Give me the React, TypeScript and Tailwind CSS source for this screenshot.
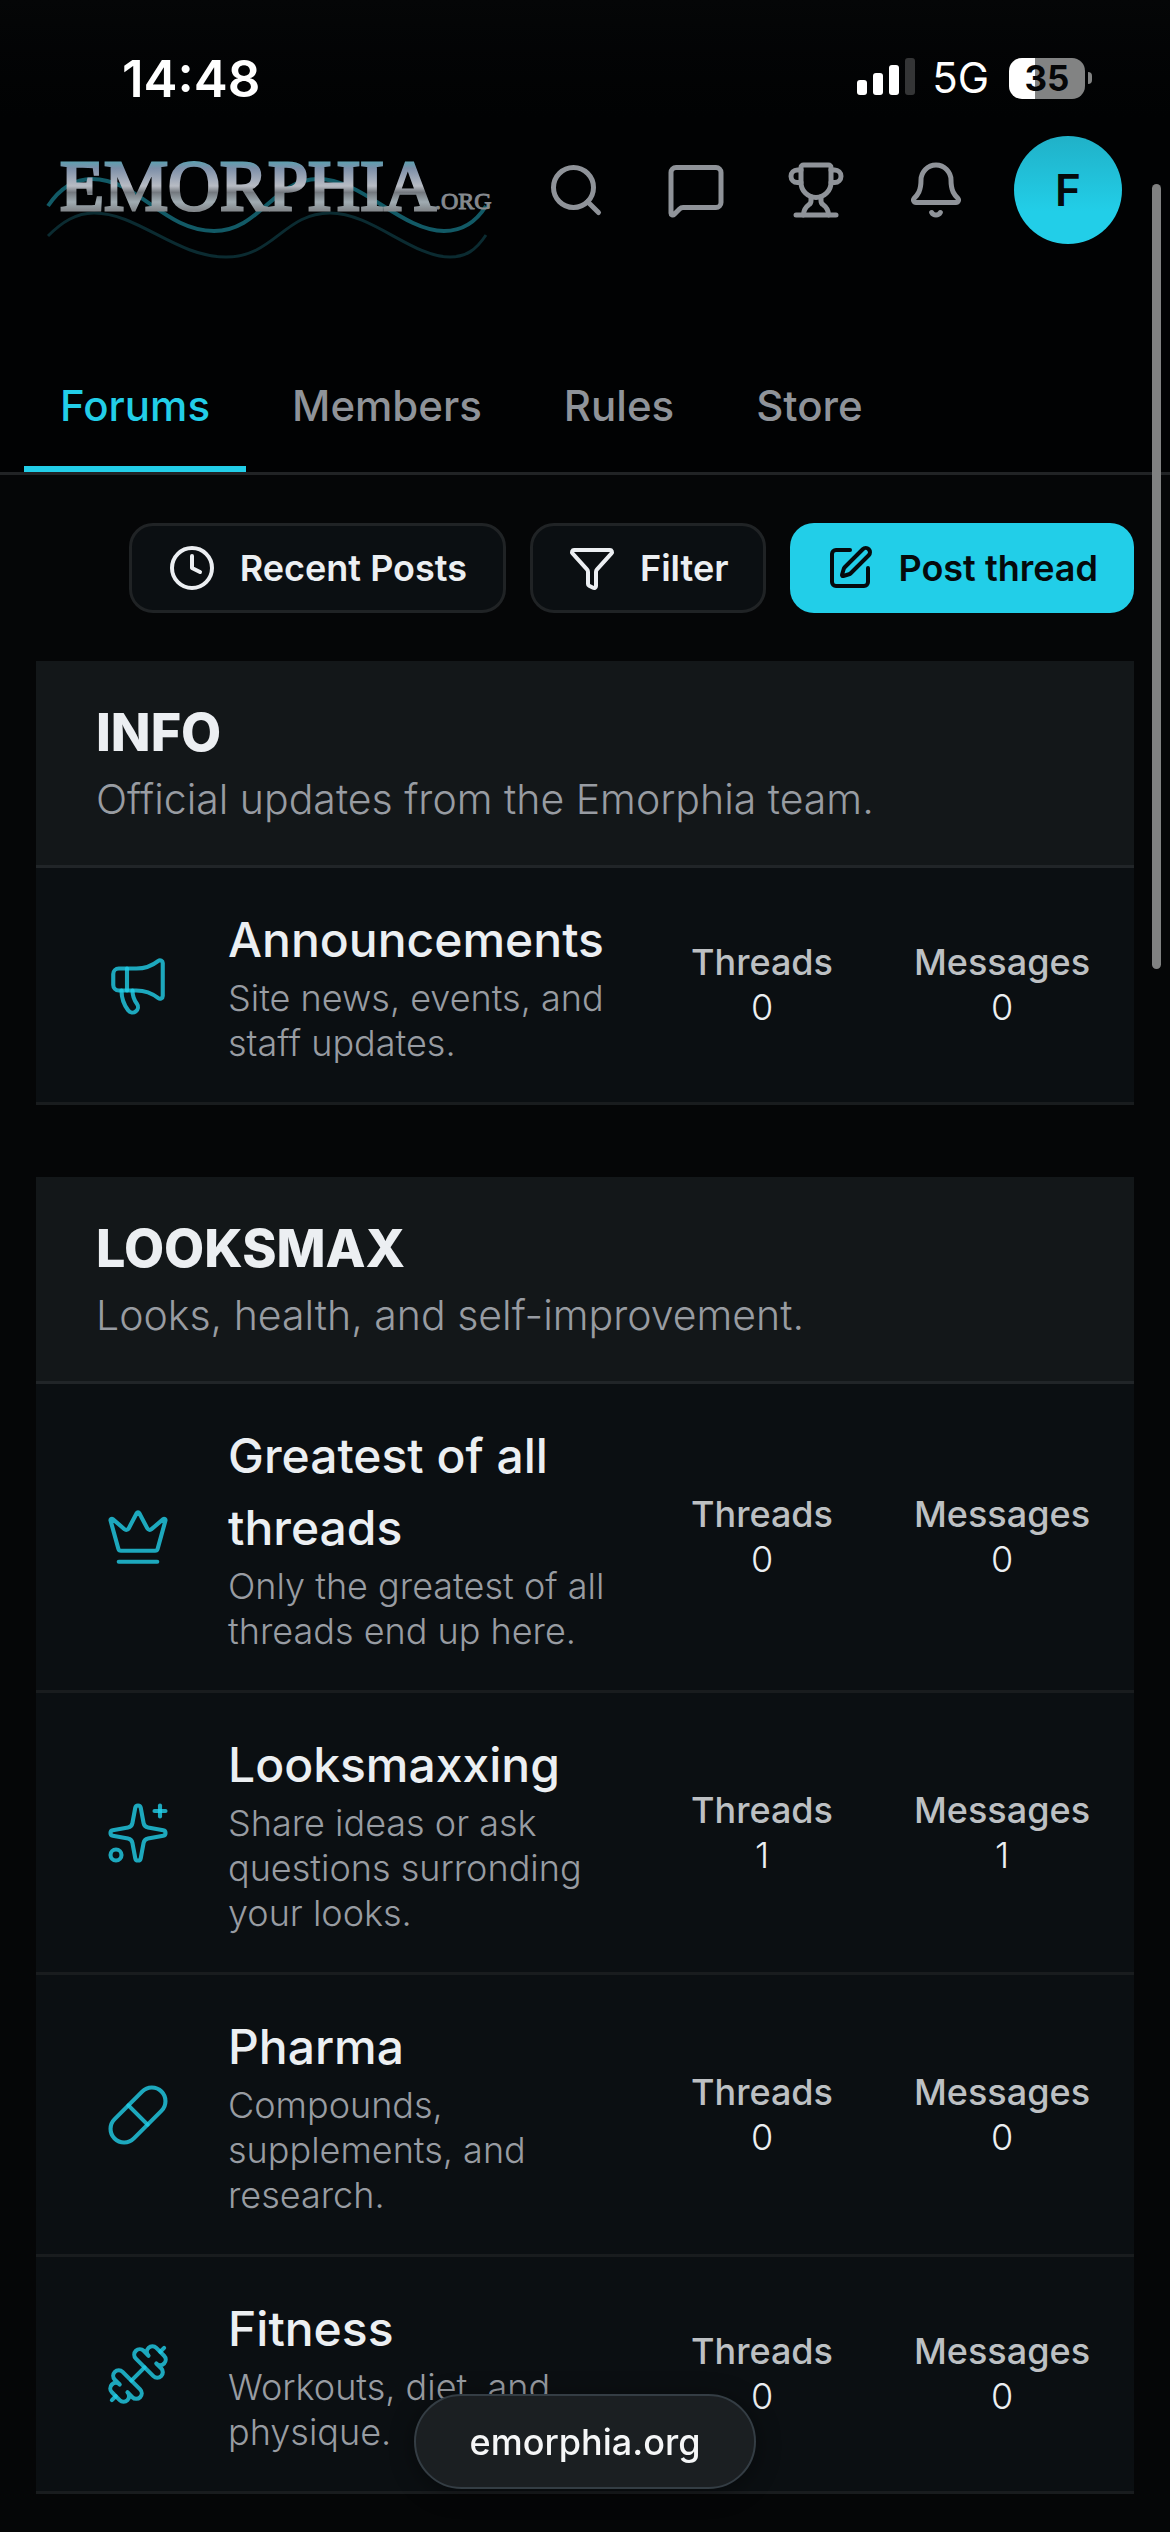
import {
    Bell,
    Clock,
    Crown,
    Dumbbell,
    Funnel,
    Megaphone,
    MessageSquare,
    Pill,
    Search,
    Sparkles,
    SquarePen,
    Trophy,
    type LucideIcon,
} from 'lucide-react';
import React from 'react';

type Forum = {
    title: string;
    description: string;
    icon: LucideIcon;
    threads: number;
    messages: number;
};

type Category = {
    title: string;
    description: string;
    forums: Forum[];
};

const categories: Category[] = [
    {
        title: 'INFO',
        description: 'Official updates from the Emorphia team.',
        forums: [
            {
                title: 'Announcements',
                description: 'Site news, events, and staff updates.',
                icon: Megaphone,
                threads: 0,
                messages: 0,
            },
        ],
    },
    {
        title: 'LOOKSMAX',
        description: 'Looks, health, and self-improvement.',
        forums: [
            {
                title: 'Greatest of all threads',
                description: 'Only the greatest of all threads end up here.',
                icon: Crown,
                threads: 0,
                messages: 0,
            },
            {
                title: 'Looksmaxxing',
                description: 'Share ideas or ask questions surronding your looks.',
                icon: Sparkles,
                threads: 1,
                messages: 1,
            },
            {
                title: 'Pharma',
                description: 'Compounds, supplements, and research.',
                icon: Pill,
                threads: 0,
                messages: 0,
            },
            {
                title: 'Fitness',
                description: 'Workouts, diet, and physique.',
                icon: Dumbbell,
                threads: 0,
                messages: 0,
            },
        ],
    },
];

const tabs = ['Forums', 'Members', 'Rules', 'Store'];

const actions = [
    { label: 'Search', icon: Search },
    { label: 'Conversations', icon: MessageSquare },
    { label: 'Trophies', icon: Trophy },
    { label: 'Alerts', icon: Bell },
];

function StatusBar() {
    return (
        <div className="flex h-[136px] items-center justify-between pt-5 pr-[78px] pl-[122px] text-white">
            <span className="text-[51px] leading-none font-semibold">14:48</span>
            <div className="flex items-center">
                <svg width="60" height="40" viewBox="0 0 60 40" fill="currentColor">
                    <rect x="1" y="22" width="10" height="15" rx="3" />
                    <rect x="17" y="15" width="10" height="22" rx="3" />
                    <rect x="33" y="7" width="10" height="30" rx="3" />
                    <rect x="49" y="0" width="10" height="37" rx="3" fill="#343536" />
                </svg>
                <span className="ml-4 text-[42px] leading-none">5G</span>
                <div className="ml-5 flex h-[41px] w-[76px] items-center justify-center rounded-[13px] bg-[linear-gradient(90deg,#fff_34%,#828383_34%)] text-[35px] leading-none font-bold text-[#050607]">
                    35
                </div>
                <div className="ml-[3px] h-3 w-1 rounded-r-full bg-[#828383]" />
            </div>
        </div>
    );
}

function Logo() {
    return (
        <a href="#" aria-label="Emorphia.org">
            <svg width="446" height="100" viewBox="0 0 446 100" fill="none" className="block overflow-visible">
                <defs>
                    <linearGradient id="chrome" x1="0" y1="0" x2="0" y2="1">
                        <stop offset="0.2" stopColor="#5f9fb0" />
                        <stop offset="0.28" stopColor="#7d8fa8" />
                        <stop offset="0.5" stopColor="#b8bcc4" />
                        <stop offset="0.58" stopColor="#73787e" />
                        <stop offset="0.7" stopColor="#a0acb2" />
                        <stop offset="0.8" stopColor="#84898d" />
                    </linearGradient>
                </defs>
                {/* Waves run behind the wordmark */}
                <path
                    d="M0 76C14 62 28 53 46 53C90 53 128 97 178 97C226 97 236 53 282 53C324 53 364 97 402 97C418 97 428 90 438 75"
                    stroke="#0b2b31"
                    strokeWidth="3"
                />
                <path
                    d="M0 46C12 28 26 19 44 19C90 19 116 71 166 71C212 71 226 19 270 19C314 19 354 71 396 71C414 71 428 62 438 46"
                    stroke="#125a66"
                    strokeWidth="4"
                />
                <text
                    x="12"
                    y="50"
                    fontSize="72"
                    fill="url(#chrome)"
                    stroke="url(#chrome)"
                    strokeWidth="3"
                    className="font-['Liberation_Serif',serif]"
                >
                    EMORPHIA
                </text>
                <text
                    x="387"
                    y="49"
                    fontSize="24"
                    fill="#85898e"
                    stroke="#85898e"
                    strokeWidth="1"
                    className="font-['Liberation_Serif',serif]"
                >
                    .ORG
                </text>
            </svg>
        </a>
    );
}

function Header() {
    return (
        <header className="border-b-[3px] border-[#212325] bg-linear-to-b from-[#050607] to-[#010203] to-25%">
            <StatusBar />

            <div className="flex items-start justify-between pr-12 pl-12">
                <div className="pt-6">
                    <Logo />
                </div>
                <div className="flex items-center gap-[60px]">
                    {actions.map(({ label, icon: Icon }) => (
                        <button key={label} type="button" aria-label={label} className="text-[#8f9399]">
                            <Icon size={60} strokeWidth={2} />
                        </button>
                    ))}
                    <button
                        type="button"
                        aria-label="Account"
                        className="-ml-3 size-[108px] rounded-full bg-linear-to-b from-[#20b1c8] to-[#22cee8] to-70% text-[44px] font-semibold text-[#050a0c]"
                    >
                        F
                    </button>
                </div>
            </div>

            <nav className="mt-[76px] flex gap-[10px] px-6">
                {tabs.map((tab, i) => (
                    <a
                        key={tab}
                        href="#"
                        className={
                            i === 0
                                ? 'border-b-[6px] border-[#22cee8] px-9 pt-10 pb-[30px] text-[42px] leading-[60px] font-medium text-[#22cee8]'
                                : 'border-b-[6px] border-transparent px-9 pt-10 pb-[30px] text-[42px] leading-[60px] font-medium text-[#8f9399]'
                        }
                    >
                        {tab}
                    </a>
                ))}
            </nav>
        </header>
    );
}

function Stat({ label, value }: { label: string; value: number }) {
    return (
        <div className="w-[240px] shrink-0 text-center text-[36px] leading-[45px]">
            <dt className="font-medium text-[#bdc0c3]">{label}</dt>
            <dd className="font-light text-[#eceff2]">{value}</dd>
        </div>
    );
}

function ForumRow({ forum }: { forum: Forum }) {
    const Icon = forum.icon;

    return (
        <li className="flex items-center border-b-[3px] border-[#191c1e] bg-[#0b0f12] py-9 pr-3">
            <div className="flex w-[192px] shrink-0 justify-center pl-3 text-[#22cee8]/80">
                <Icon size={66} strokeWidth={1.5} />
            </div>
            <div className="min-w-0 flex-1 pr-6">
                <h3 className="text-[48px] leading-[72px] font-medium text-[#eceff2]">
                    <a href="#">{forum.title}</a>
                </h3>
                <p className="text-[36px] leading-[45px] font-light text-[#989ca2]">{forum.description}</p>
            </div>
            <dl className="flex">
                <Stat label="Threads" value={forum.threads} />
                <Stat label="Messages" value={forum.messages} />
            </dl>
        </li>
    );
}

export default function App() {
    return (
        <div className="relative min-h-screen w-full bg-[#050607] font-['Inter',sans-serif]">
            <Header />

            <main className="px-9 pt-12 pb-6">
                <div className="flex justify-end gap-6 text-[36px] font-semibold">
                    <button
                        type="button"
                        className="flex h-[90px] items-center gap-6 rounded-3xl border-[3px] border-[#202325] bg-[#0b0f12] px-9 text-[#eceff2]"
                    >
                        <Clock size={48} />
                        Recent Posts
                    </button>
                    <button
                        type="button"
                        className="flex h-[90px] items-center gap-6 rounded-3xl border-[3px] border-[#202325] bg-[#0b0f12] px-[35px] text-[#eceff2]"
                    >
                        <Funnel size={48} />
                        Filter
                    </button>
                    <button
                        type="button"
                        className="flex h-[90px] items-center gap-6 rounded-3xl bg-[#22cee8] px-9 text-[#050a0c]"
                    >
                        <SquarePen size={48} />
                        Post thread
                    </button>
                </div>

                <div className="mt-12 flex flex-col gap-[72px]">
                    {categories.map((category) => (
                        <section key={category.title}>
                            <div className="border-b-[3px] border-[#212528] bg-[#131719] px-[60px] py-9">
                                <h2 className="text-[52px] leading-[72px] font-extrabold text-[#eceff2]">
                                    {category.title}
                                </h2>
                                <p className="text-[41px] leading-[60px] font-light text-[#989ca2]">
                                    {category.description}
                                </p>
                            </div>
                            <ul>
                                {category.forums.map((forum) => (
                                    <ForumRow key={forum.title} forum={forum} />
                                ))}
                            </ul>
                        </section>
                    ))}
                </div>
            </main>

            {/* Browser chrome: scroll thumb and address pill */}
            <div className="absolute top-[184px] right-[9px] h-[785px] w-[9px] rounded-full bg-[#808181]" />
            <div className="fixed inset-x-0 bottom-[43px] flex justify-center">
                <div className="flex h-[95px] items-center rounded-full border-2 border-[#343d44] bg-[#1b1f22] px-[54px] text-[36px] font-medium text-[#f5f6f7] shadow-[0_4px_24px_rgba(0,0,0,0.4)]">
                    emorphia.org
                </div>
            </div>
        </div>
    );
}
